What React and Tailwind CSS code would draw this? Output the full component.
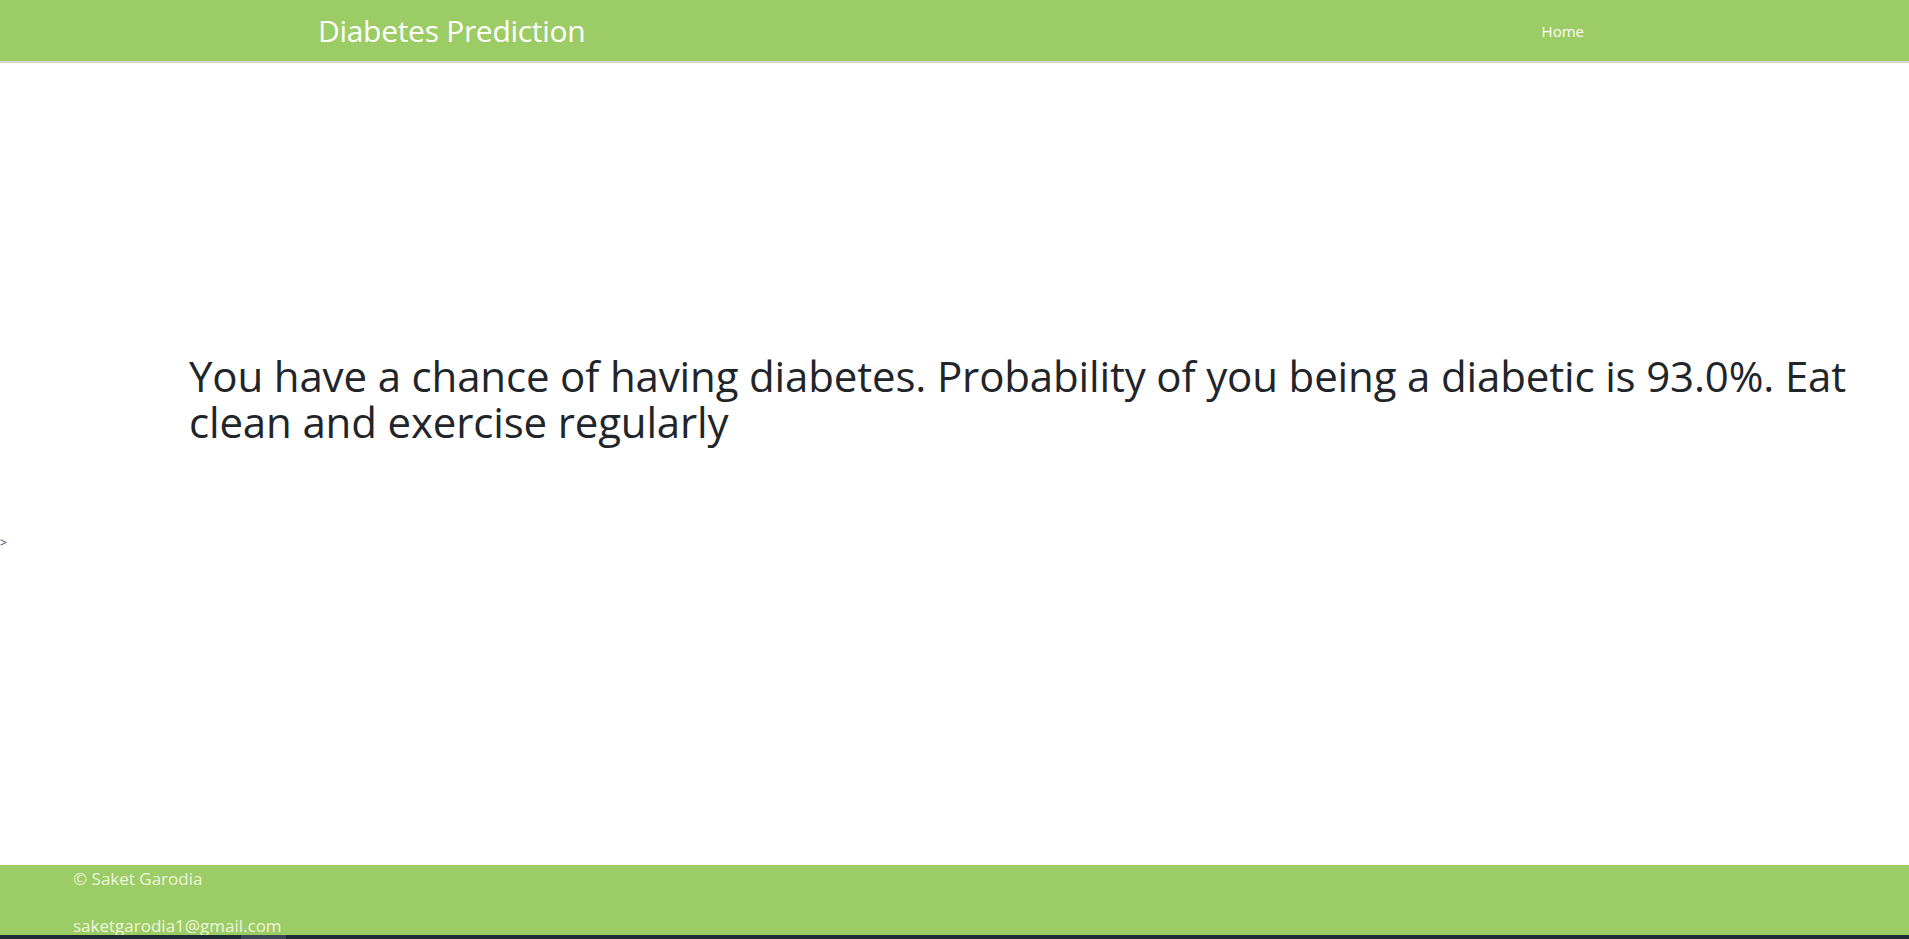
import React from "react";

const font = { fontFamily: '"Open Sans", "Noto Sans", sans-serif' };

const App = () => {
  return (
    <div className="w-full h-[939px] overflow-hidden bg-white flex flex-col" style={font}>
      {/* Navbar */}
      <nav className="h-[63px] shrink-0 bg-[#9ccc65] border-b-2 border-[#d6d6d6] flex items-center">
        <div className="pl-[318px] pt-[3px] flex-1">
          <a className="text-[30px] leading-none text-white tracking-[-0.3px]">Diabetes Prediction</a>
        </div>
        <ul className="pr-[325px] pt-[1px]">
          <li className="text-[15px] text-white">Home</li>
        </ul>
      </nav>

      {/* Result */}
      <main className="h-[802px] shrink-0 flex flex-col">
        <div className="pt-[290px] pl-[189px] pr-[30px]">
          <h1 className="text-[42px] leading-[46px] text-[#212529] tracking-[-0.15px]">
            You have a chance of having diabetes. Probability of you being a diabetic is 93.0%. Eat clean and
            exercise regularly
          </h1>
        </div>
        <span className="mt-[92px] text-[12px] leading-none text-[#3b3b8f] self-start">&gt;</span>
      </main>

      {/* Footer */}
      <footer className="h-[70px] shrink-0 bg-[#9ccc65] overflow-hidden pl-[73px] text-[17px] text-[#eef6dc]">
        <p className="leading-[24px] pt-[2px]">© Saket Garodia</p>
        <p className="leading-[24px] mt-[23px]">saketgarodia1@gmail.com</p>
      </footer>
      <div className="h-[4px] shrink-0 bg-[#1d2b33] flex">
        <div className="ml-[241px] w-[45px] bg-[#3a4650]"></div>
      </div>
    </div>
  );
};

export default App;
